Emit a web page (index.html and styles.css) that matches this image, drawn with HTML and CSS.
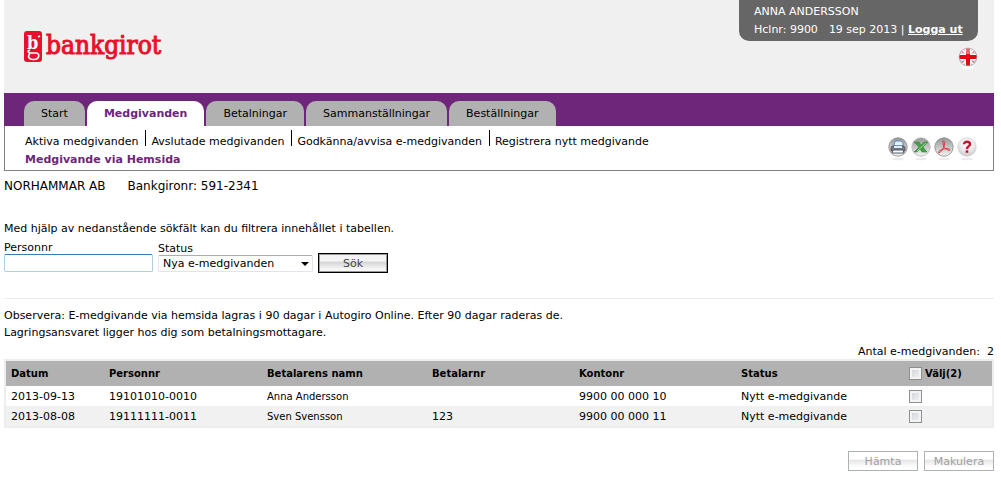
FILE: index.html
```html
<!DOCTYPE html>
<html lang="sv">
<head>
<meta charset="utf-8">
<meta name="viewport" content="width=device-width, initial-scale=1">
<title>Bankgirot – Medgivande via Hemsida</title>
<link rel="stylesheet" href="styles.css">
</head>
<body>
<header class="header">
  <a class="logo" href="#">
    <svg class="logo-mark" viewBox="0 0 18 31" aria-hidden="true">
      <rect width="18" height="31" rx="3" fill="#e8112d"/>
      <text class="logo-letter" x="3" y="18">b</text>
      <path d="M14 6l2-1M6 19c-3 1-2 3 1 3h5c4 0 4 6-2 6.500-5 .5-7-3-4-6" fill="none" stroke="#fff" stroke-width="1.600"/>
    </svg>
    <span class="logo-name">bankgirot</span>
  </a>
  <div class="account">
    <div class="user-box">
      <span>ANNA ANDERSSON</span>
      <span class="user-line"><span>Hclnr: 9900</span><span>19 sep 2013 | <a class="logout" href="#">Logga ut</a></span></span>
    </div>
    <button class="icon-button language" type="button" aria-label="English">
      <svg class="icon" viewBox="0 0 20 24">
        <defs><clipPath id="flag-clip"><circle cx="10" cy="10" r="9"/></clipPath></defs>
        <ellipse cx="10" cy="20" rx="6" ry="2" fill="#fff" opacity=".8"/>
        <g clip-path="url(#flag-clip)">
          <rect width="20" height="20" fill="#5f7699"/>
          <path d="M1 1l18 18M19 1L1 19" stroke="#fff" stroke-width="4"/>
          <path d="M1 2l18 16M19 2L1 18" stroke="#d96a72" stroke-width="1.500"/>
          <path d="M10 0v20M0 10h20" stroke="#fff" stroke-width="7"/>
          <path d="M10 0v20M0 10h20" stroke="#dd0a0f" stroke-width="4"/>
          <ellipse cx="10" cy="3" rx="7" ry="4" fill="#fff" opacity=".4"/>
        </g>
        <circle cx="10" cy="10" r="9" fill="none" stroke="#aab3c0" stroke-width=".7"/>
      </svg>
    </button>
  </div>
</header>

<nav class="tabs">
  <a class="tab" href="#">Start</a>
  <a class="tab tab-active" href="#">Medgivanden</a>
  <a class="tab" href="#">Betalningar</a>
  <a class="tab" href="#">Sammanställningar</a>
  <a class="tab" href="#">Beställningar</a>
</nav>

<section class="subnav">
  <div>
    <nav class="sublinks">
      <a class="sublink" href="#">Aktiva medgivanden</a>
      <a class="sublink" href="#">Avslutade medgivanden</a>
      <a class="sublink" href="#">Godkänna/avvisa e-medgivanden</a>
      <a class="sublink" href="#">Registrera nytt medgivande</a>
    </nav>
    <h1 class="page-title">Medgivande via Hemsida</h1>
  </div>
  <div class="tools">
    <button class="icon-button" type="button" aria-label="Skriv ut">
      <svg class="icon" viewBox="0 0 20 24">
        <defs>
          <linearGradient id="silver" x1="0" y1="0" x2="0" y2="1"><stop offset="0" stop-color="#969696"/><stop offset=".55" stop-color="#c9c9c9"/><stop offset="1" stop-color="#f4f4f4"/></linearGradient>
          <radialGradient id="pale" cx=".5" cy=".3" r=".7"><stop offset="0" stop-color="#fff"/><stop offset=".6" stop-color="#e9e9e9"/><stop offset="1" stop-color="#c9c9c9"/></radialGradient>
        </defs>
        <ellipse cx="10" cy="22" rx="6" ry="1.300" fill="#ececec"/>
        <circle cx="10" cy="10" r="9.200" fill="url(#silver)" stroke="#888" stroke-width=".8"/>
        <path d="M6 9l1-5h6l2 2v3z" fill="#e2f0ff" stroke="#3f7cc4" stroke-width=".8"/>
        <path d="M4 9h12l1 2v3H3v-3z" fill="#737b86" stroke="#39414b" stroke-width=".7"/>
        <path d="M6 9h8v2H6z" fill="#dce8f5"/>
        <path d="M5 13h10l1 3H4z" fill="#f5f8ff" stroke="#39424e" stroke-width=".8"/>
      </svg>
    </button>
    <button class="icon-button" type="button" aria-label="Exportera till Excel">
      <svg class="icon" viewBox="0 0 20 24">
        <ellipse cx="10" cy="22" rx="6" ry="1.300" fill="#ececec"/>
        <circle cx="10" cy="10" r="9.200" fill="url(#silver)" stroke="#b5b5b5" stroke-width=".8"/>
        <path d="M3 5h5l2 3 3-3h4l-5 5 4 5h-5l-2-3-3 3H3l5-5z" fill="#43a047" stroke="#2d7d35" stroke-width=".5"/>
        <path d="M15 6l-9 8" stroke="#a6dc9d" stroke-width=".9"/>
      </svg>
    </button>
    <button class="icon-button" type="button" aria-label="Exportera till PDF">
      <svg class="icon" viewBox="0 0 20 24">
        <ellipse cx="10" cy="22" rx="6" ry="1.300" fill="#ececec"/>
        <circle cx="10" cy="10" r="9.200" fill="url(#silver)" stroke="#888" stroke-width=".8"/>
        <path d="M9 4c2 0 2 2 1 5-1 3-3 6-5 7-1-1 0-2 2-3 3-1 6-2 8-1 2 1 1 2-1 1-3-1-5-4-5-7 0-1-1-2 0-2z" fill="none" stroke="#df3440" stroke-width="1"/>
      </svg>
    </button>
    <button class="icon-button" type="button" aria-label="Hjälp">
      <svg class="icon" viewBox="0 0 20 24">
        <ellipse cx="10" cy="22" rx="6" ry="1.300" fill="#ececec"/>
        <circle cx="10" cy="10" r="9.200" fill="url(#pale)" stroke="#d2d2d2" stroke-width=".8"/>
        <path d="M7 7.200C7 4 13 4 13 7.200C13 9.300 10 9 10 12" fill="none" stroke="#c4122f" stroke-width="2.400"/>
        <rect x="8.700" y="13.300" width="2.600" height="2.500" fill="#c4122f"/>
      </svg>
    </button>
  </div>
</section>

<main class="content">
  <p class="company"><span>NORHAMMAR AB</span><span>Bankgironr: 591-2341</span></p>

  <p class="intro">Med hjälp av nedanstående sökfält kan du filtrera innehållet i tabellen.</p>
  <form class="filter">
    <div class="field field-person">
      <label for="personnr">Personnr</label>
      <input class="text-input" id="personnr" type="text">
    </div>
    <div class="field field-status">
      <label for="status">Status</label>
      <div class="select-wrap">
        <select class="select" id="status"><option>Nya e-medgivanden</option></select>
      </div>
    </div>
    <button class="button button-search" type="button">Sök</button>
  </form>

  <div class="notice">
    <p>Observera: E-medgivande via hemsida lagras i 90 dagar i Autogiro Online. Efter 90 dagar raderas de.</p>
    <p>Lagringsansvaret ligger hos dig som betalningsmottagare.</p>
  </div>

  <p class="count"><span>Antal e-medgivanden:</span><span>2</span></p>
  <table class="grid">
    <colgroup>
      <col class="col-date"><col class="col-person"><col class="col-name"><col class="col-payer"><col class="col-account"><col class="col-status"><col class="col-select">
    </colgroup>
    <thead>
      <tr><th>Datum</th><th>Personnr</th><th>Betalarens namn</th><th>Betalarnr</th><th>Kontonr</th><th>Status</th><th><label class="check-label"><input class="check" type="checkbox">Välj(2)</label></th></tr>
    </thead>
    <tbody>
      <tr><td>2013-09-13</td><td>19101010-0010</td><td class="name">Anna Andersson</td><td></td><td>9900 00 000 10</td><td>Nytt e-medgivande</td><td><input class="check" type="checkbox" aria-label="Välj Anna Andersson"></td></tr>
      <tr><td>2013-08-08</td><td>19111111-0011</td><td class="name">Sven Svensson</td><td>123</td><td>9900 00 000 11</td><td>Nytt e-medgivande</td><td><input class="check" type="checkbox" aria-label="Välj Sven Svensson"></td></tr>
    </tbody>
  </table>

  <div class="actions">
    <button class="button" type="button" disabled>Hämta</button>
    <button class="button" type="button" disabled>Makulera</button>
  </div>
</main>
</body>
</html>
```
FILE: styles.css
```css
* { box-sizing: border-box; }

body {
  margin: 0 7px 0 4px;
  background: #fff;
  color: #000;
  font: 11px/17px Verdana, "DejaVu Sans", sans-serif;
}

p, h1 { margin: 0; }
a { color: inherit; text-decoration: none; }
button, input, select { font: inherit; color: inherit; }

.header {
  display: flex;
  justify-content: space-between;
  align-items: flex-start;
  min-height: 93px;
  padding: 0 16px 0 20px;
  background: #f0f0f0;
}

.logo {
  display: flex;
  gap: 4px;
  margin-top: 31px;
  color: #e8112d;
}
.logo-mark { width: 18px; height: 31px; }
.logo-letter { fill: #fff; font: bold 18px "DejaVu Serif Condensed", "DejaVu Serif", serif; }
.logo-name {
  font: 26px/28px "DejaVu Serif Condensed", "DejaVu Serif", serif;
  -webkit-text-stroke: 1px #e8112d;
}

.account {
  display: flex;
  flex-direction: column;
  align-items: flex-end;
  gap: 6px;
}
.user-box {
  display: flex;
  flex-direction: column;
  gap: 1px;
  min-width: 239px;
  padding: 3px 15px;
  border-radius: 0 0 10px 10px;
  background: #666;
  color: #fff;
}
.user-line { display: flex; gap: 11px; }
.logout { font-weight: bold; text-decoration: underline; }

.icon-button {
  display: block;
  padding: 0;
  border: 0;
  background: none;
}
.icon { display: block; width: 20px; height: 24px; }

.tabs {
  display: flex;
  gap: 2px;
  padding: 8px 20px 0;
  background: #6e267b;
}
.tab {
  padding: 0 17px;
  border-radius: 10px 10px 0 0;
  background: #b1b1b1;
  line-height: 25px;
}
.tab-active { background: #fff; color: #6e267b; font-weight: bold; }

.subnav {
  display: flex;
  justify-content: space-between;
  padding: 2px 16px 0 20px;
  border: 1px solid #808080;
  border-top: 0;
}
.sublinks { display: flex; padding-top: 2px; }
.sublink { padding-top: 4px; line-height: 16px; }
.sublink + .sublink {
  margin-left: 7px;
  padding-left: 6px;
  background: linear-gradient(#000, #000) left top / 1px 16px no-repeat;
}
.page-title { color: #6e267b; font-size: 11px; line-height: 20px; }
.tools { display: flex; gap: 3px; }

.company {
  display: flex;
  gap: 22px;
  padding-top: 6px;
  font-size: 12px;
  line-height: 18px;
}
.intro { margin-top: 25px; }

.filter {
  display: flex;
  align-items: flex-end;
  gap: 5px;
  padding-bottom: 25px;
  border-bottom: 1px solid #ececec;
}
.field {
  display: flex;
  flex-direction: column;
  padding: 4px 0 1px;
}
.field label { line-height: 13px; }
.field-person { width: 149px; }
.field-status { width: 155px; }
.text-input {
  width: 100%;
  height: 18px;
  padding: 0 4px;
  border: 1px solid #abcfe9;
  border-top-color: #3d7bad;
  border-radius: 2px;
  background: #fff;
}
.select-wrap { position: relative; }
.select {
  display: block;
  width: 100%;
  height: 17px;
  padding: 0 20px 0 4px;
  border: 1px solid #e3e3eb;
  border-top-color: #abadb3;
  border-radius: 2px;
  background: #fff;
  line-height: 15px;
  appearance: none;
}
.select-wrap::after {
  content: "";
  position: absolute;
  top: 7px;
  right: 4px;
  border: 4px solid transparent;
  border-top-color: #000;
  border-bottom: 0;
  pointer-events: none;
}

.button {
  width: 70px;
  height: 20px;
  padding: 0;
  border: 1px solid #000;
  background: linear-gradient(#f4f4f4 40%, #d4d4d4 45%, #f8f8f8 85%);
  color: #444;
  line-height: 17px;
}
.button:disabled {
  border-color: #adb2b5;
  background: linear-gradient(#fff 40%, #e6e6e6 45%, #fff 85%);
  color: #a0a0a0;
}
.button-search { box-shadow: inset 0 0 0 1px #999; }

.notice { padding-top: 8px; }

.count {
  display: flex;
  justify-content: flex-end;
  gap: 7px;
  padding-top: 4px;
  line-height: 14px;
}

.grid {
  width: 100%;
  table-layout: fixed;
  border: 2px solid #ededed;
  border-spacing: 0;
}
.col-date { width: 98px; }
.col-person { width: 158px; }
.col-name { width: 165px; }
.col-payer { width: 147px; }
.col-account { width: 162px; }
.col-status { width: 168px; }
.col-select { width: 88px; }
.grid th, .grid td { height: 20px; padding: 0 5px; text-align: left; }
.grid th { height: 25px; background: #b1b1b1; font-size: 10px; }
.grid .name { font-size: 10px; }
.grid tbody tr:nth-child(even) { background: #f1f1f1; }

.check {
  display: block;
  width: 13px;
  height: 13px;
  margin: 0;
  border: 1px solid #8e8f8f;
  background: linear-gradient(135deg, #cbcfd5, #f6f6f6);
  box-shadow: inset 0 0 0 2px #f4f4f4;
  appearance: none;
}
.check-label { display: flex; align-items: center; gap: 3px; }

.actions {
  display: flex;
  justify-content: flex-end;
  gap: 6px;
  padding-top: 23px;
}
```
